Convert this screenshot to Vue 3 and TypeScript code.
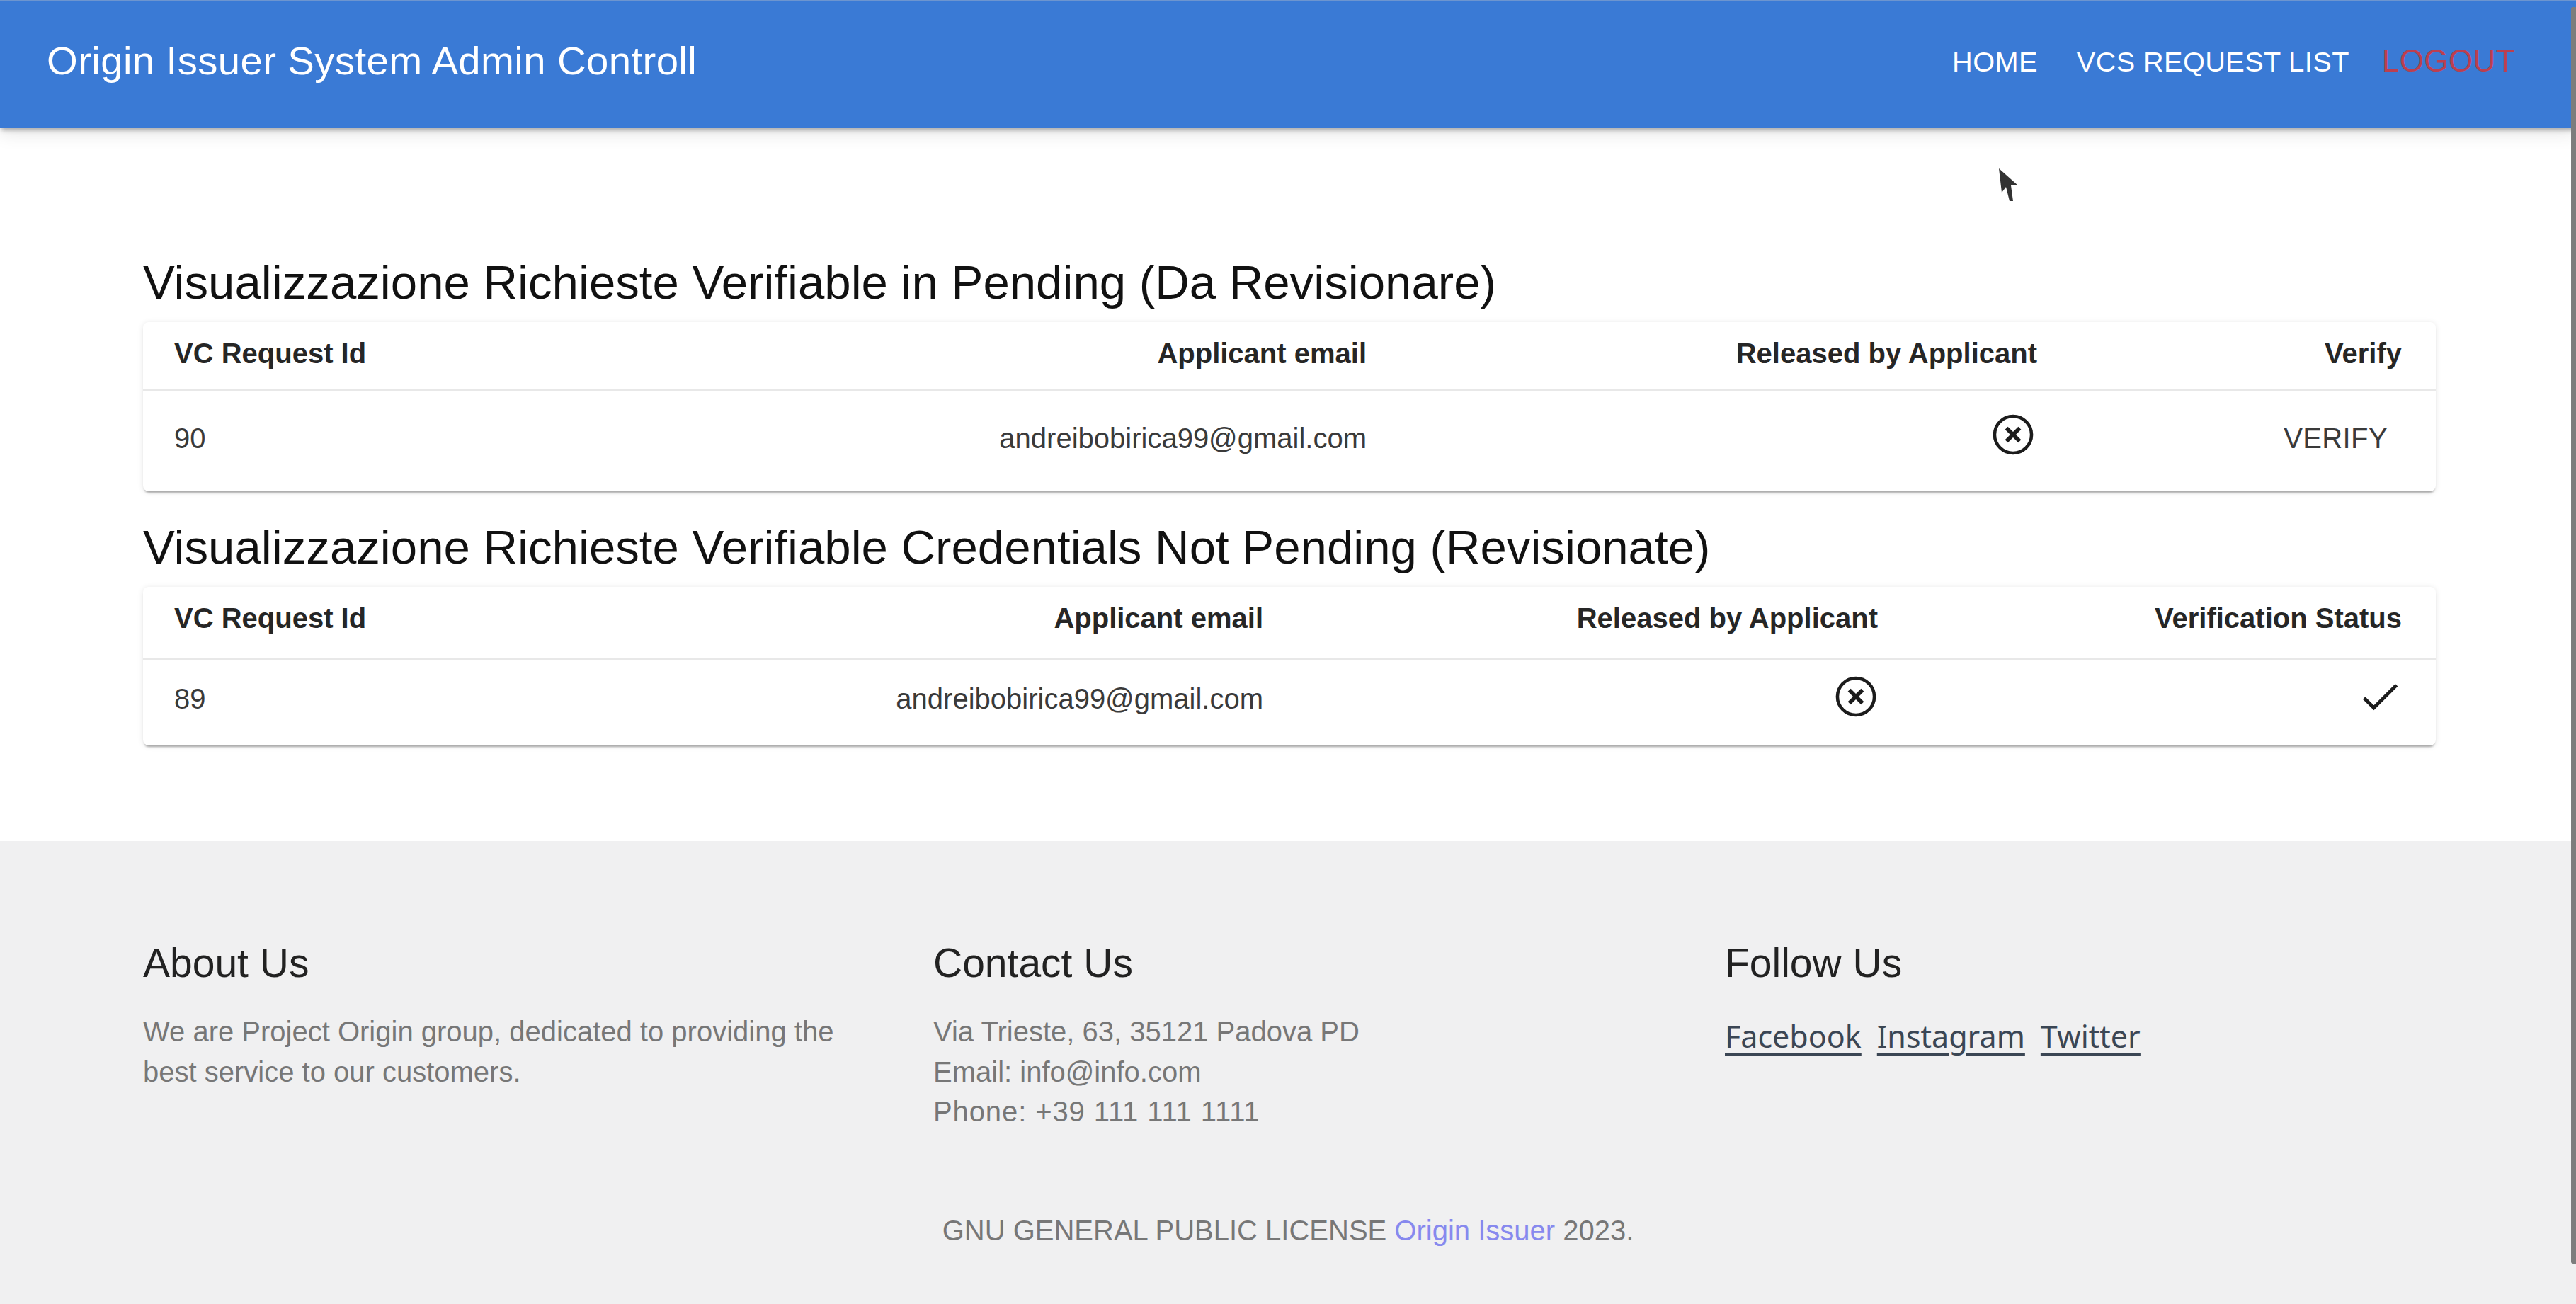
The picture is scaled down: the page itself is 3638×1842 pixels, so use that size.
<script setup lang="ts">
interface Section {
  id: string
  title: string
  columns: string
  headers: string[]
  request: string
  email: string
  verified: boolean
}

const sections: Section[] = [
  {
    id: 'pending',
    title: 'Visualizzazione Richieste Verifiable in Pending (Da Revisionare)',
    columns: '1774px 947px 517px',
    headers: ['Applicant email', 'Released by Applicant', 'Verify'],
    request: '90',
    email: 'andreibobirica99@gmail.com',
    verified: false,
  },
  {
    id: 'reviewed',
    title: 'Visualizzazione Richieste Verifiable Credentials Not Pending (Revisionate)',
    columns: '1628px 868px 742px',
    headers: ['Applicant email', 'Released by Applicant', 'Verification Status'],
    request: '89',
    email: 'andreibobirica99@gmail.com',
    verified: true,
  },
]

const navLinks = ['HOME', 'VCS REQUEST LIST']
const socialLinks = ['Facebook', 'Instagram', 'Twitter']
</script>

<template>
  <div class="page">
    <header class="topbar">
      <div class="brand">Origin Issuer System Admin Controll</div>
      <nav class="nav">
        <a v-for="link in navLinks" :key="link" class="nav-link">{{ link }}</a>
        <a class="nav-link logout">LOGOUT</a>
      </nav>
    </header>

    <main class="content">
      <section v-for="section in sections" :key="section.id" class="block" :class="section.id">
        <h2 class="block-title">{{ section.title }}</h2>
        <div class="card">
          <div class="row head" :style="{ gridTemplateColumns: section.columns }">
            <div class="cell">
              <span class="first">VC Request Id</span>
              <span>{{ section.headers[0] }}</span>
            </div>
            <div class="cell">{{ section.headers[1] }}</div>
            <div class="cell">{{ section.headers[2] }}</div>
          </div>
          <div class="row body" :style="{ gridTemplateColumns: section.columns }">
            <div class="cell">
              <span class="first">{{ section.request }}</span>
              <span>{{ section.email }}</span>
            </div>
            <div class="cell">
              <svg class="icon" viewBox="0 0 24 24">
                <circle class="ring" cx="12" cy="12" r="9.2" />
                <path d="M14.59 8L12 10.59 9.41 8 8 9.41 10.59 12 8 14.59 9.41 16 12 13.41 14.59 16 16 14.59 13.41 12 16 9.41 14.59 8z" />
              </svg>
            </div>
            <div class="cell">
              <svg v-if="section.verified" class="icon" viewBox="0 0 24 24">
                <polyline class="tick" points="4.1,12.7 9,17.6 20.3,6.3" />
              </svg>
              <button v-else class="verify">VERIFY</button>
            </div>
          </div>
        </div>
      </section>
    </main>

    <footer class="footer">
      <div class="footer-cols">
        <div>
          <h3 class="footer-title">About Us</h3>
          <p class="footer-text">We are Project Origin group, dedicated to providing the best service to our customers.</p>
        </div>
        <div>
          <h3 class="footer-title">Contact Us</h3>
          <p class="footer-text">Via Trieste, 63, 35121 Padova PD<br />Email: info@info.com<br /><span class="phone">Phone: +39 111 111 1111</span></p>
        </div>
        <div>
          <h3 class="footer-title">Follow Us</h3>
          <div class="socials">
            <a v-for="link in socialLinks" :key="link" class="social">{{ link }}</a>
          </div>
        </div>
      </div>
      <p class="copyright">GNU GENERAL PUBLIC LICENSE <a class="origin">Origin Issuer</a> 2023.</p>
    </footer>

    <!-- recorded mouse pointer and overlay scrollbar -->
    <svg class="pointer" viewBox="0 0 30 50">
      <path d="M2 2 L29 26 L19 26 L22 48 L17 48 L12 28 L6 36 Z" />
    </svg>
    <div class="scrollbar"></div>
  </div>
</template>

<style>
html,
body {
  margin: 0;
  background: #fff;
  overflow: hidden;
}
</style>

<style scoped>
.page {
  position: relative;
  width: 3638px;
  height: 1842px;
  overflow: hidden;
  font-family: "Liberation Sans", Arial, sans-serif;
  color: #222;
}

.topbar {
  display: flex;
  align-items: center;
  justify-content: space-between;
  height: 181px;
  box-sizing: border-box;
  padding: 0 86px 6px 66px;
  background: #3a7ad5;
  box-shadow: inset 0 2px 0 #6d95cf, 0 5px 6px -2px rgba(0, 0, 0, 0.28), 0 8px 24px rgba(0, 0, 0, 0.1);
  position: relative;
  color: #fff;
}

.brand {
  margin-bottom: 4px;
  font-size: 56.3px;
  letter-spacing: 0.4px;
}

.nav {
  display: flex;
  align-items: center;
  gap: 55px;
}

.nav-link {
  font-size: 39.7px;
  letter-spacing: 0.4px;
}

.logout {
  margin: 0 0 3px -9px;
  font-size: 44px;
  color: #bb3f50;
}

.content {
  padding: 178px 198px 135px 202px;
}

.block + .block {
  margin-top: 39px;
}

.block-title {
  margin: 0 0 16px;
  font-size: 67.2px;
  font-weight: 400;
  line-height: 80px;
  color: #111;
}

.card {
  border-radius: 8px;
  background: #fff;
  box-shadow: 0 4px 3px -2px rgba(0, 0, 0, 0.32), 0 1px 8px rgba(0, 0, 0, 0.1);
}

.row {
  display: grid;
  align-items: center;
  box-sizing: border-box;
}

.cell {
  display: flex;
  justify-content: flex-end;
  align-items: center;
  padding-right: 46px;
  line-height: 45px;
  font-size: 40px;
  color: #3a3a3a;
}

.cell:first-child {
  justify-content: space-between;
  padding-left: 44px;
}

.cell:last-child {
  padding-right: 48px;
}

.head {
  border-bottom: 3px solid #e8e8e8;
}

.head .cell {
  font-weight: 700;
  color: #262626;
}

.pending .head {
  height: 98px;
  padding-bottom: 6px;
}

.reviewed .head {
  height: 104px;
  padding-bottom: 12px;
}

.pending .body {
  height: 141px;
  padding-bottom: 8px;
}

.reviewed .body {
  height: 120px;
  padding-bottom: 12px;
}

.icon {
  display: block;
  width: 68px;
  height: 68px;
  fill: #1c1c1c;
}

.ring,
.tick {
  fill: none;
  stroke: #1c1c1c;
}

.ring {
  stroke-width: 1.6;
}

.tick {
  stroke-width: 1.75;
}

.pending .icon {
  margin-bottom: 12px;
}

.reviewed .icon {
  margin: 0 -3px 6px 0;
}

.verify {
  margin-right: 20px;
  padding: 0;
  border: 0;
  background: none;
  font: inherit;
  letter-spacing: 0.4px;
  color: #3a3a3a;
}

.footer {
  height: 655px;
  box-sizing: border-box;
  padding: 137px 0 0 202px;
  background: #f0f0f1;
}

.footer-cols {
  display: grid;
  grid-template-columns: 1116px 1118px 1100px;
}

.footer-title {
  margin: 0 0 34px;
  font-size: 57px;
  font-weight: 400;
  line-height: 70px;
  color: #222;
}

.footer-text {
  width: 1030px;
  margin: 0;
  font-size: 40px;
  line-height: 56.5px;
  color: #777;
}

.phone {
  letter-spacing: 0.9px;
}

.socials {
  display: flex;
  gap: 22px;
  line-height: 70px;
}

.social {
  font-family: "Noto Sans", sans-serif;
  font-size: 43px;
  color: #3b4654;
  text-decoration: underline;
  text-decoration-thickness: 4px;
  text-underline-offset: 8px;
}

.copyright {
  margin: 111px 0 0 -202px;
  font-size: 40px;
  line-height: 56.5px;
  text-align: center;
  color: #777;
}

.origin {
  color: #8789ee;
}

.pointer {
  position: absolute;
  left: 2821px;
  top: 236px;
  width: 30px;
  height: 50px;
  fill: #333;
}

.scrollbar {
  position: absolute;
  top: 10px;
  right: 0;
  width: 7px;
  height: 1775px;
  border-radius: 3px 0 0 3px;
  background: #7d7d7d;
}
</style>
